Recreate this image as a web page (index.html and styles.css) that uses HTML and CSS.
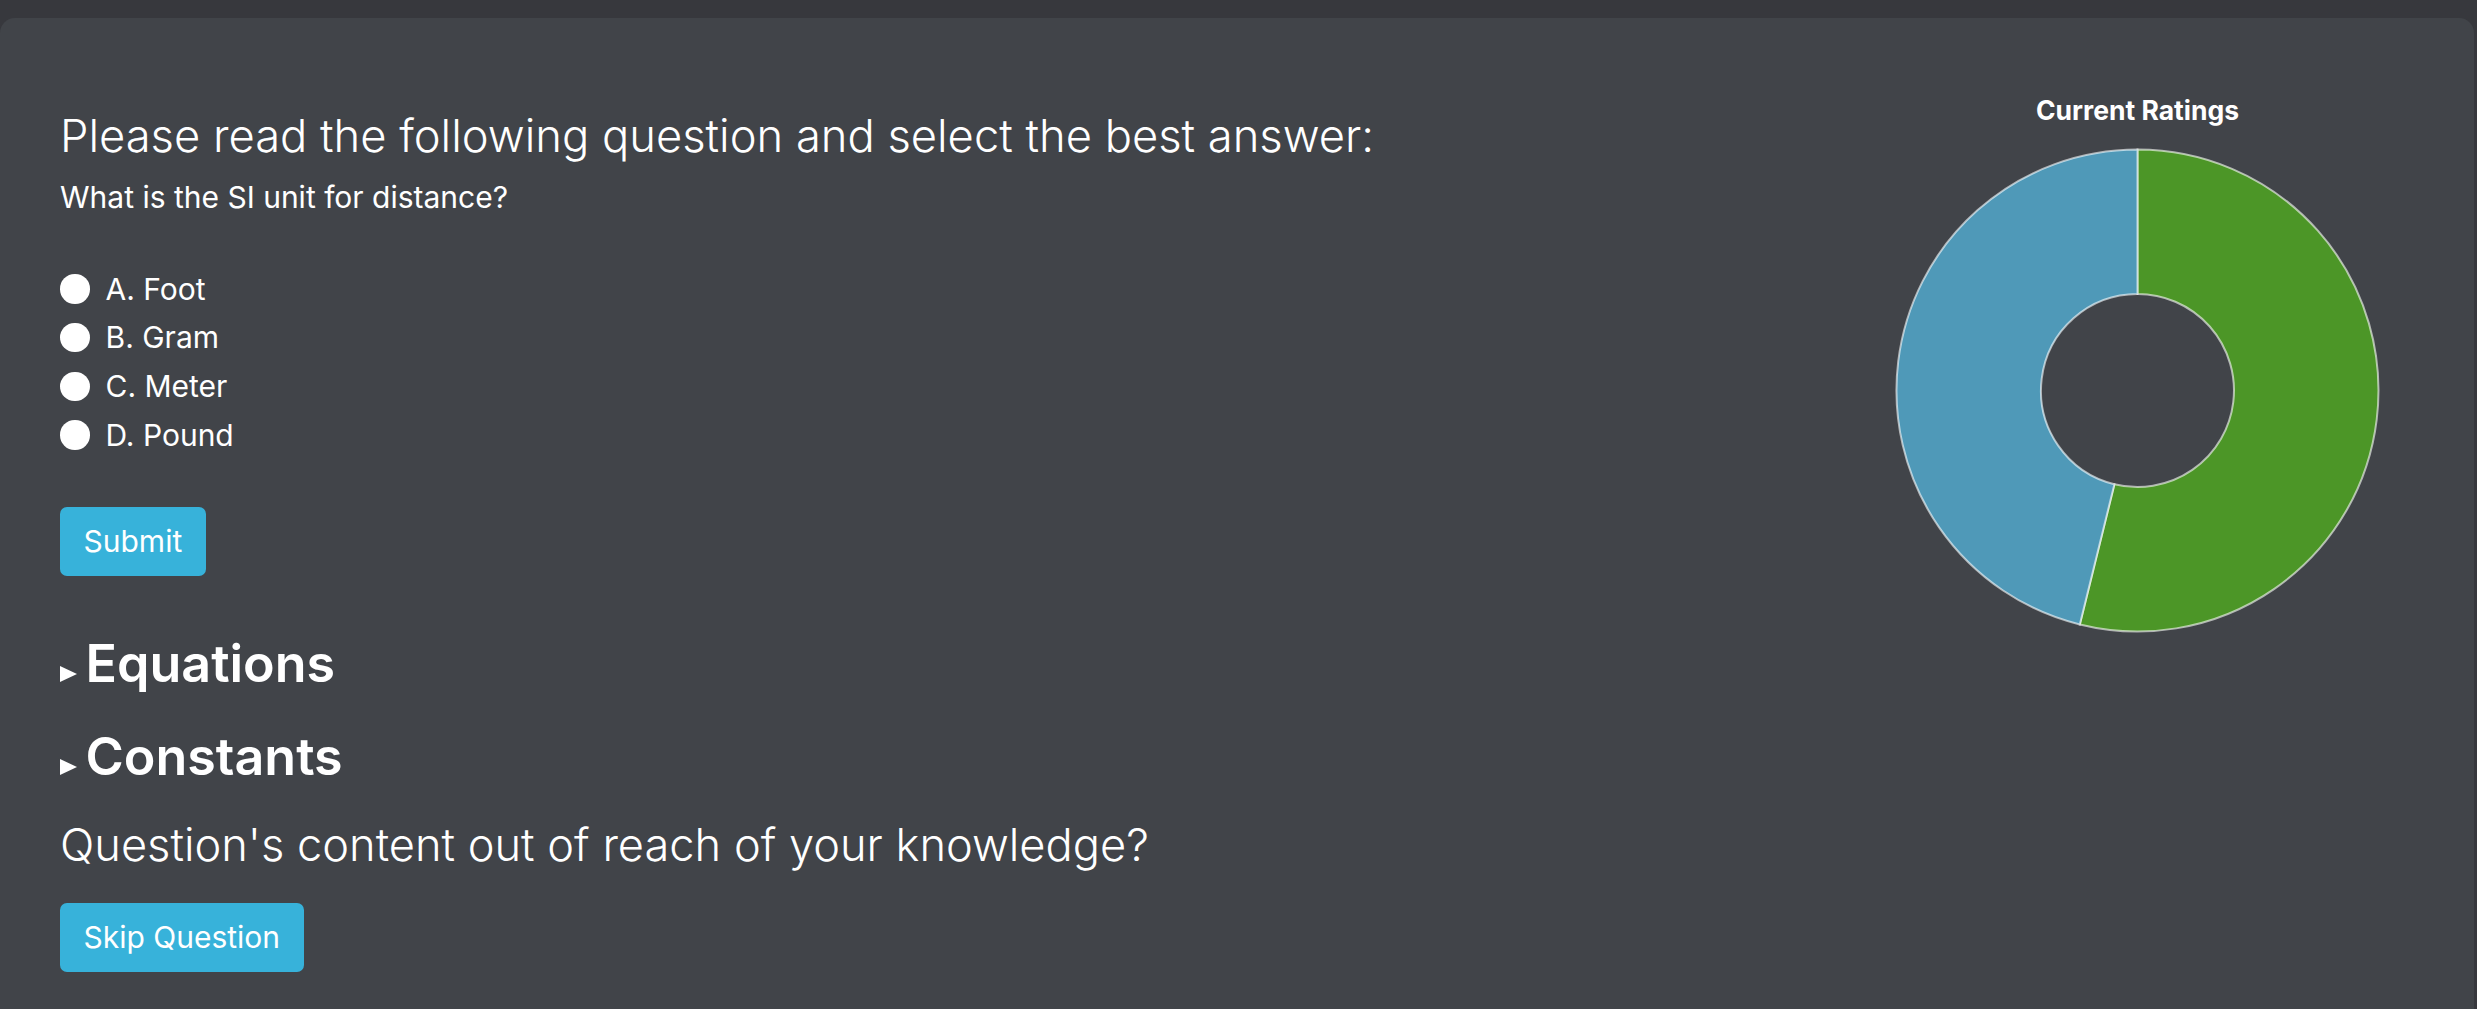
FILE: index.html
```html
<!DOCTYPE html>
<html lang="en">
<head>
<meta charset="utf-8">
<title>Question</title>
<link rel="stylesheet" href="styles.css">
</head>
<body>
<div class="card">
  <div class="main">
    <h3 class="lead-title">Please read the following question and select the best answer:</h3>
    <p class="question">What is the SI unit for distance?</p>
    <form class="options">
      <label class="option"><input type="radio" name="answer" class="radio"><span>A. Foot</span></label>
      <label class="option"><input type="radio" name="answer" class="radio"><span>B. Gram</span></label>
      <label class="option"><input type="radio" name="answer" class="radio"><span>C. Meter</span></label>
      <label class="option"><input type="radio" name="answer" class="radio"><span>D. Pound</span></label>
    </form>
    <button class="btn btn-submit" type="button">Submit</button>
    <details class="section section-first"><summary><span class="marker"></span><h2 class="section-title">Equations</h2></summary></details>
    <details class="section"><summary><span class="marker"></span><h2 class="section-title">Constants</h2></summary></details>
    <h4 class="skip-title">Question's content out of reach of your knowledge?</h4>
    <button class="btn btn-skip" type="button">Skip Question</button>
  </div>
  <div class="chart">
    <div class="chart-title">Current Ratings</div>
    <svg class="donut" width="485" height="485" viewBox="0 0 485 485">
      <path class="slice-green" d="M 242.5 1.5 A 241 241 0 1 1 184.8 476.5 L 219.4 336.2 A 96.5 96.5 0 1 0 242.5 146 Z"/>
      <path class="slice-blue" d="M 184.8 476.5 A 241 241 0 0 1 242.5 1.5 L 242.5 146 A 96.5 96.5 0 0 0 219.4 336.2 Z"/>
    </svg>
  </div>
</div>
</body>
</html>
```

FILE: styles.css
```css
* { box-sizing: border-box; }
html, body { margin: 0; padding: 0; }
body {
  background: #37383d;
  font-family: Inter, "Noto Sans", "Liberation Sans", sans-serif;
  color: #fff;
  height: 1009px;
  overflow: hidden;
}
.card {
  margin-top: 18px;
  width: 2474px;
  min-height: 1100px;
  background: #414449;
  border-radius: 15px;
  display: flex;
  padding: 76px 94px 0 60px;
}
.main { flex: 1; display: flex; flex-direction: column; align-items: flex-start; }
.lead-title {
  margin: 14.55px 0 0;
  font-size: 45.3px;
  line-height: 54px;
  font-weight: 300;
}
.question {
  margin: 12.95px 0 0;
  font-size: 30px;
  line-height: 45px;
}
.options { margin-top: 44.17px; display: flex; flex-direction: column; }
.option {
  display: flex;
  align-items: center;
  height: 48.67px;
  font-size: 30px;
  line-height: 48.67px;
}
.radio {
  appearance: none;
  -webkit-appearance: none;
  margin: 0 16px 0 0;
  width: 29.5px;
  height: 29.5px;
  border-radius: 50%;
  background: #fff;
  border: none;
}
.btn {
  border: none;
  border-radius: 7px;
  background: #37b2da;
  color: #fff;
  font-family: inherit;
  font-size: 30px;
  height: 69px;
  padding: 0 23.5px;
}
.btn-submit { margin-top: 47.56px; }
.section { margin: 0; }
.section-first { margin-top: 57.1px; }
.section + .section { margin-top: 31px; }
.section summary {
  list-style: none;
  display: flex;
  align-items: baseline;
}
.section summary::-webkit-details-marker { display: none; }
.marker {
  width: 0;
  height: 0;
  border-left: 17px solid #fff;
  border-top: 8.5px solid transparent;
  border-bottom: 8.5px solid transparent;
  margin-right: 8.5px;
}
.section-title {
  margin: 0;
  font-size: 52px;
  line-height: 62px;
  font-weight: 600;
}
.skip-title {
  margin: 30.55px 0 0;
  font-size: 45.2px;
  line-height: 54px;
  font-weight: 300;
}
.btn-skip { margin-top: 30.35px; }
.chart { width: 485px; display: flex; flex-direction: column; align-items: center; }
.chart-title {
  margin-top: 0.4px;
  font-size: 26.5px;
  line-height: 32px;
  font-weight: 700;
}
.donut { margin-top: 21.6px; display: block; }
.slice-green { fill: #4c9627; stroke: rgba(255,255,255,0.6); stroke-width: 2; }
.slice-blue { fill: #4f99b8; stroke: rgba(255,255,255,0.6); stroke-width: 2; }
```
